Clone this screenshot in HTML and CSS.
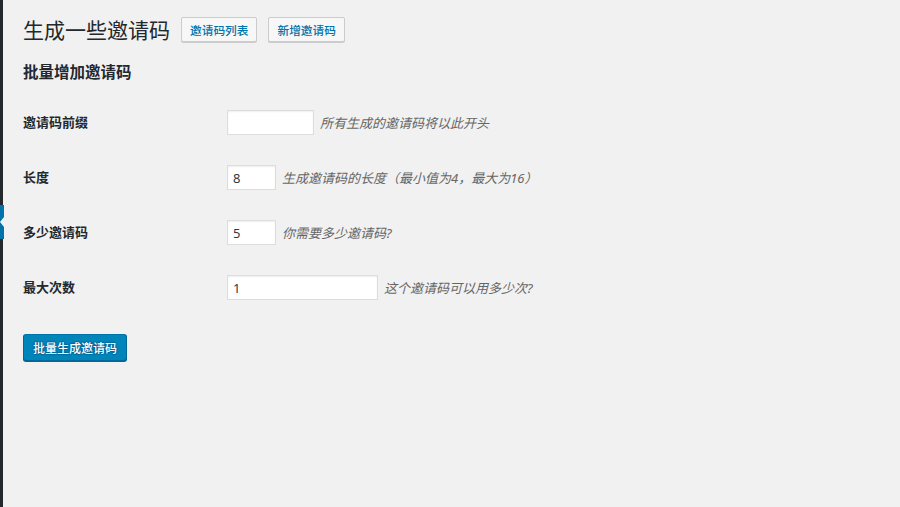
FILE: index.html
```html
<!DOCTYPE html>
<html lang="zh-CN">
<head>
<meta charset="utf-8">
<title>生成一些邀请码</title>
<link rel="stylesheet" href="styles.css">
</head>
<body>
<div class="layout">
  <aside class="sidebar">
    <div class="current"><span class="notch"></span></div>
  </aside>
  <main class="wrap">
    <div class="title-row">
      <h1 class="page-title">生成一些邀请码</h1>
      <a class="btn-action">邀请码列表</a>
      <a class="btn-action">新增邀请码</a>
    </div>
    <h2 class="section-title">批量增加邀请码</h2>
    <form class="form-table">
      <div class="row">
        <label class="label">邀请码前缀</label>
        <div class="field"><input class="input w-prefix" type="text"><span class="desc">所有生成的邀请码将以此开头</span></div>
      </div>
      <div class="row">
        <label class="label">长度</label>
        <div class="field"><input class="input w-small" type="text" value="8"><span class="desc">生成邀请码的长度（最小值为4，最大为16）</span></div>
      </div>
      <div class="row">
        <label class="label">多少邀请码</label>
        <div class="field"><input class="input w-small" type="text" value="5"><span class="desc">你需要多少邀请码?</span></div>
      </div>
      <div class="row">
        <label class="label">最大次数</label>
        <div class="field"><input class="input w-regular" type="text" value="1"><span class="desc">这个邀请码可以用多少次?</span></div>
      </div>
      <div class="submit-row">
        <button class="btn-primary" type="button">批量生成邀请码</button>
      </div>
    </form>
  </main>
</div>
</body>
</html>
```

FILE: styles.css
```css
html, body {
  margin: 0;
  padding: 0;
  height: 100%;
}
body {
  background: #f1f1f1;
  color: #23282d;
  font-family: "Noto Sans", "Noto Sans CJK SC", sans-serif;
  font-size: 13px;
}
.layout {
  display: flex;
  min-height: 100%;
}
.sidebar {
  width: 3px;
  background: #23282d;
  flex: none;
  position: relative;
}
.current {
  position: absolute;
  top: 205px;
  left: 0;
  width: 4px;
  height: 34px;
  background: #0073aa;
}
.notch {
  position: absolute;
  right: 0;
  top: 12px;
  width: 0;
  height: 0;
  border-top: 5px solid transparent;
  border-bottom: 5px solid transparent;
  border-right: 4px solid #f1f1f1;
}
.wrap {
  flex: 1;
  padding: 17px 20px 0 20px;
}
.title-row {
  display: flex;
  align-items: center;
  height: 26px;
}
.page-title {
  margin: 0 11px 0 0;
  font-size: 21px;
  font-weight: 400;
  line-height: 26px;
  color: #23282d;
}
.btn-action {
  display: inline-flex;
  align-items: center;
  box-sizing: border-box;
  height: 25px;
  padding: 0 8px;
  margin-right: 11px;
  font-size: 11.7px;
  font-weight: 500;
  color: #0073aa;
  background: #f7f7f7;
  border: 1px solid #ccc;
  border-radius: 2px;
  box-shadow: 0 1px 0 #ccc;
  text-decoration: none;
  margin-top: -1px;
}
.section-title {
  margin: 19px 0 13px 0;
  font-size: 15.5px;
  line-height: 20px;
  font-weight: 700;
  color: #23282d;
}
.form-table {
  margin: 0;
}
.row {
  display: grid;
  grid-template-columns: 204px 1fr;
  align-items: center;
  height: 55px;
}
.label {
  font-size: 13px;
  font-weight: 700;
  color: #23282d;
  padding-bottom: 3px;
}
.field {
  display: flex;
  align-items: center;
}
.input {
  box-sizing: border-box;
  height: 25px;
  padding: 0 5px;
  border: 1px solid #ddd;
  box-shadow: inset 0 1px 2px rgba(0,0,0,0.07);
  background: #fff;
  font-family: "Noto Sans", "Noto Sans CJK SC", sans-serif;
  font-size: 13px;
  color: #32373c;
  outline: none;
}
.w-prefix { width: 87px; }
.w-small { width: 49px; }
.w-regular { width: 151px; }
.desc {
  margin-left: 6px;
  font-size: 13px;
  font-style: italic;
  color: #666;
}
.submit-row {
  padding-top: 19px;
}
.btn-primary {
  box-sizing: border-box;
  height: 27px;
  padding: 0 9px;
  font-family: "Noto Sans", "Noto Sans CJK SC", sans-serif;
  font-size: 12px;
  font-weight: 500;
  color: #fff;
  background: #0085ba;
  border: 1px solid;
  border-color: #0073aa #006799 #006799;
  border-radius: 3px;
  box-shadow: 0 1px 0 #006799;
  text-shadow: 0 -1px 1px #006799, 1px 0 1px #006799, 0 1px 1px #006799, -1px 0 1px #006799;
  cursor: pointer;
}
```
